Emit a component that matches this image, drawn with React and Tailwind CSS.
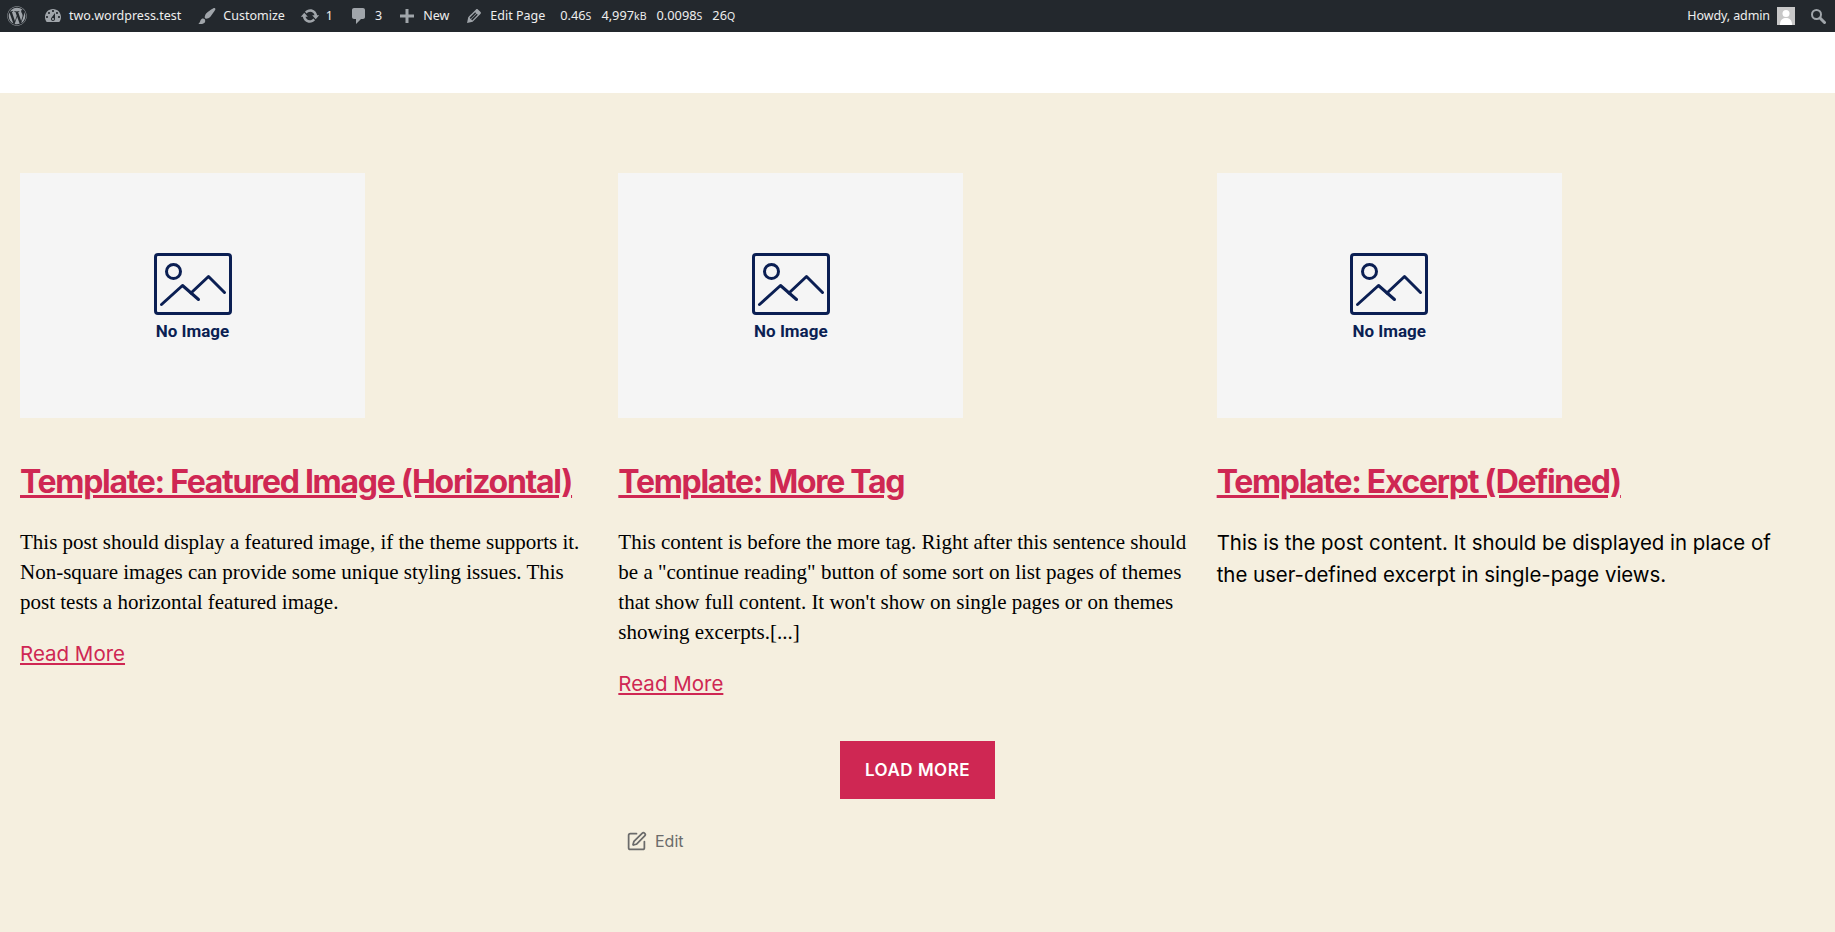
import React from 'react';
import { FaWordpress } from 'react-icons/fa';
import { SquarePen } from 'lucide-react';

// admin bar glyphs, 20x20 like dashicons
const paths = {
  dashboard: 'M3.76 16h12.48c1.1-1.37 1.76-3.11 1.76-5 0-4.42-3.58-8-8-8s-8 3.58-8 8c0 1.89.66 3.63 1.76 5zM10 4c.55 0 1 .45 1 1s-.45 1-1 1-1-.45-1-1 .45-1 1-1zM6 6c.55 0 1 .45 1 1s-.45 1-1 1-1-.45-1-1 .45-1 1-1zm8 0c.55 0 1 .45 1 1s-.45 1-1 1-1-.45-1-1 .45-1 1-1zm-5.37 5.55L12 7v6c0 1.1-.9 2-2 2s-2-.9-2-2c0-.57.24-1.08.63-1.45zM4 10c.55 0 1 .45 1 1s-.45 1-1 1-1-.45-1-1 .45-1 1-1zm12 0c.55 0 1 .45 1 1s-.45 1-1 1-1-.45-1-1 .45-1 1-1zm-5 3c0-.55-.45-1-1-1s-1 .45-1 1 .45 1 1 1 1-.45 1-1z',
  brush: 'M18.33 3.57s.27-.8-.31-1.36c-.53-.52-1.22-.24-1.22-.24-.61.3-5.76 3.47-7.67 5.57-.86.96-2.06 3.79-1.09 4.82.92.98 3.96-.17 4.79-1 2.06-2.06 5.21-7.17 5.5-7.79zM1.4 17.65c2.37-1.56 1.46-3.41 3.23-4.64.93-.65 2.22-.62 3.08.29.63.67.8 2.57-.16 3.46-1.57 1.45-4 1.55-6.15.89z',
  update: 'M10.2 3.28c3.53 0 6.43 2.61 6.92 6h2.08l-3.5 4-3.5-4h2.32c-.45-1.97-2.21-3.45-4.32-3.45-1.45 0-2.73.71-3.54 1.78L4.95 5.66C6.23 4.2 8.11 3.28 10.2 3.28zm-.4 13.44c-3.52 0-6.43-2.61-6.92-6H.8l3.5-4c1.17 1.33 2.33 2.67 3.5 4H5.48c.45 1.97 2.21 3.45 4.32 3.45 1.45 0 2.73-.71 3.54-1.78l1.71 1.95c-1.28 1.46-3.15 2.38-5.25 2.38z',
  comment: 'M5 2h9c1.1 0 2 .9 2 2v7c0 1.1-.9 2-2 2h-2l-5 5v-5H5c-1.1 0-2-.9-2-2V4c0-1.1.9-2 2-2z',
  plus: 'M17 8.5v3h-5.5V17h-3v-5.5H3v-3h5.5V3h3v5.5H17z',
  edit: 'M13.89 3.39l2.71 2.72c.46.46.42 1.24.03 1.64l-8.01 8.02-5.56 1.16 1.16-5.58s7.6-7.63 7.99-8.03c.39-.39 1.22-.39 1.68.07zm-2.73 2.79l-5.59 5.61 1.11 1.11 5.54-5.65zm-2.97 8.23l5.58-5.6-1.07-1.08-5.59 5.6z',
};

const BarIcon = ({ name }) => (
  <svg width="20" height="20" viewBox="0 0 20 20" fill="#a0a5aa" className="shrink-0">
    <path d={paths[name]} />
  </svg>
);

const NoImage = () => (
  <div className="w-[345px] h-[245px] bg-[#f5f5f5] flex flex-col items-center pt-[80px] shrink-0">
    <svg width="78" height="62" viewBox="0 0 78 62" fill="none" stroke="#0b1f53" strokeWidth="3" strokeLinecap="round" strokeLinejoin="round">
      <rect x="1.5" y="1.5" width="75" height="59" rx="2.5" />
      <circle cx="19.5" cy="18.5" r="7" />
      <path d="M7.5 51.5 L28.5 32.5 L44.5 46.5" />
      <path d="M37 40 L54.5 23.5 L70.5 39.5" />
    </svg>
    <span className="mt-[6px] text-[17px] leading-[20px] font-bold text-[#0b1f53] font-['Roboto',sans-serif]">No Image</span>
  </div>
);

const Post = ({ title, children, readMore, sans }) => (
  <article className="min-w-0">
    <NoImage />
    <h2 className="mt-[44px] text-[32px] leading-[40px] font-bold tracking-[-1.31px] text-[#cf2753] underline font-['Inter',sans-serif]">{title}</h2>
    <p className={sans
      ? "mt-[25px] text-[20.4px] leading-[32px] text-black font-['Inter',sans-serif]"
      : "mt-[25px] text-[21px] leading-[30px] text-black font-['Liberation_Serif',serif]"}>{children}</p>
    {readMore && (
      <a className="block mt-[22px] text-[20.5px] leading-[30px] text-[#cf2753] underline font-['Inter',sans-serif]">Read More</a>
    )}
  </article>
);

const BarItem = ({ icon, children, className = 'ml-[16px]' }) => (
  <div className={`flex items-center gap-[6px] ${className}`}>
    <BarIcon name={icon} />
    <span>{children}</span>
  </div>
);

const Unit = ({ children, upper }) => (
  <span className={`text-[10.5px] ${upper ? 'uppercase' : ''}`}>{children}</span>
);

const App = () => {
  return (
    <div className="min-h-[932px] flex flex-col bg-[#f5efdf]">
      <div className="h-[32px] bg-[#23282d] flex items-center justify-between pl-[7px] pr-[9px] text-[12.5px] text-[#eeeeee] font-['Noto_Sans',sans-serif]">
        <div className="flex items-center">
          <FaWordpress className="text-[#a0a5aa] w-[20px] h-[20px]" />
          <BarItem icon="dashboard">two.wordpress.test</BarItem>
          <BarItem icon="brush">Customize</BarItem>
          <BarItem icon="update" className="ml-[15px]">1</BarItem>
          <BarItem icon="comment">3</BarItem>
          <BarItem icon="plus" className="ml-[15px]">New</BarItem>
          <BarItem icon="edit" className="ml-[15px]">Edit Page</BarItem>
          <div className="ml-[15px] flex gap-[10px] text-[12.8px]">
            <span>0.46<Unit upper>s</Unit></span>
            <span>4,997<Unit>kB</Unit></span>
            <span>0.0098<Unit upper>s</Unit></span>
            <span>26<Unit>Q</Unit></span>
          </div>
        </div>
        <div className="flex items-center">
          <span className="tracking-[-0.1px]">Howdy, admin</span>
          <div className="ml-[7px] w-[18px] h-[18px] bg-[#c8c8c8] overflow-hidden">
            <svg width="18" height="18" viewBox="0 0 18 18" fill="#ffffff">
              <circle cx="9" cy="6.5" r="3.5" />
              <path d="M3 18 C3 12.5 6 11 9 11 C12 11 15 12.5 15 18 Z" />
            </svg>
          </div>
          <svg width="16" height="16" viewBox="0 0 16 16" fill="none" stroke="#a0a5aa" className="ml-[15px]">
            <circle cx="6.5" cy="6.5" r="4.5" strokeWidth="2" />
            <path d="M10 10 L14.5 14.5" strokeWidth="3" strokeLinecap="round" />
          </svg>
        </div>
      </div>

      <div className="h-[61px] bg-white" />

      <main className="flex-1 pt-[80px] pl-[20px] pr-[40px]">
        <div className="grid grid-cols-3 gap-x-[20px]">
          <Post title="Template: Featured Image (Horizontal)" readMore>
            This post should display a featured image, if the theme supports it. Non-square images can provide some unique styling issues. This post tests a horizontal featured image.
          </Post>
          <Post title="Template: More Tag" readMore>
            This content is before the more tag. Right after this sentence should be a "continue reading" button of some sort on list pages of themes that show full content. It won't show on single pages or on themes showing excerpts.[...]
          </Post>
          <Post title="Template: Excerpt (Defined)" sans>
            This is the post content. It should be displayed in place of the user-defined excerpt in single-page views.
          </Post>
        </div>
        <div className="flex justify-center mt-[42px] ml-[20px]">
          <button className="w-[155px] h-[58px] bg-[#cf2753] text-white text-[17px] font-semibold tracking-[0.5px] pt-[1px] font-['Inter',sans-serif]">LOAD MORE</button>
        </div>
        <div className="ml-[606px] mt-[30px] flex items-center gap-[8px] text-[16px] leading-[24px] text-[#6b6b6b] font-['Inter',sans-serif]">
          <SquarePen className="w-[21px] h-[21px]" />
          <span>Edit</span>
        </div>
      </main>
    </div>
  );
};

export default App;
